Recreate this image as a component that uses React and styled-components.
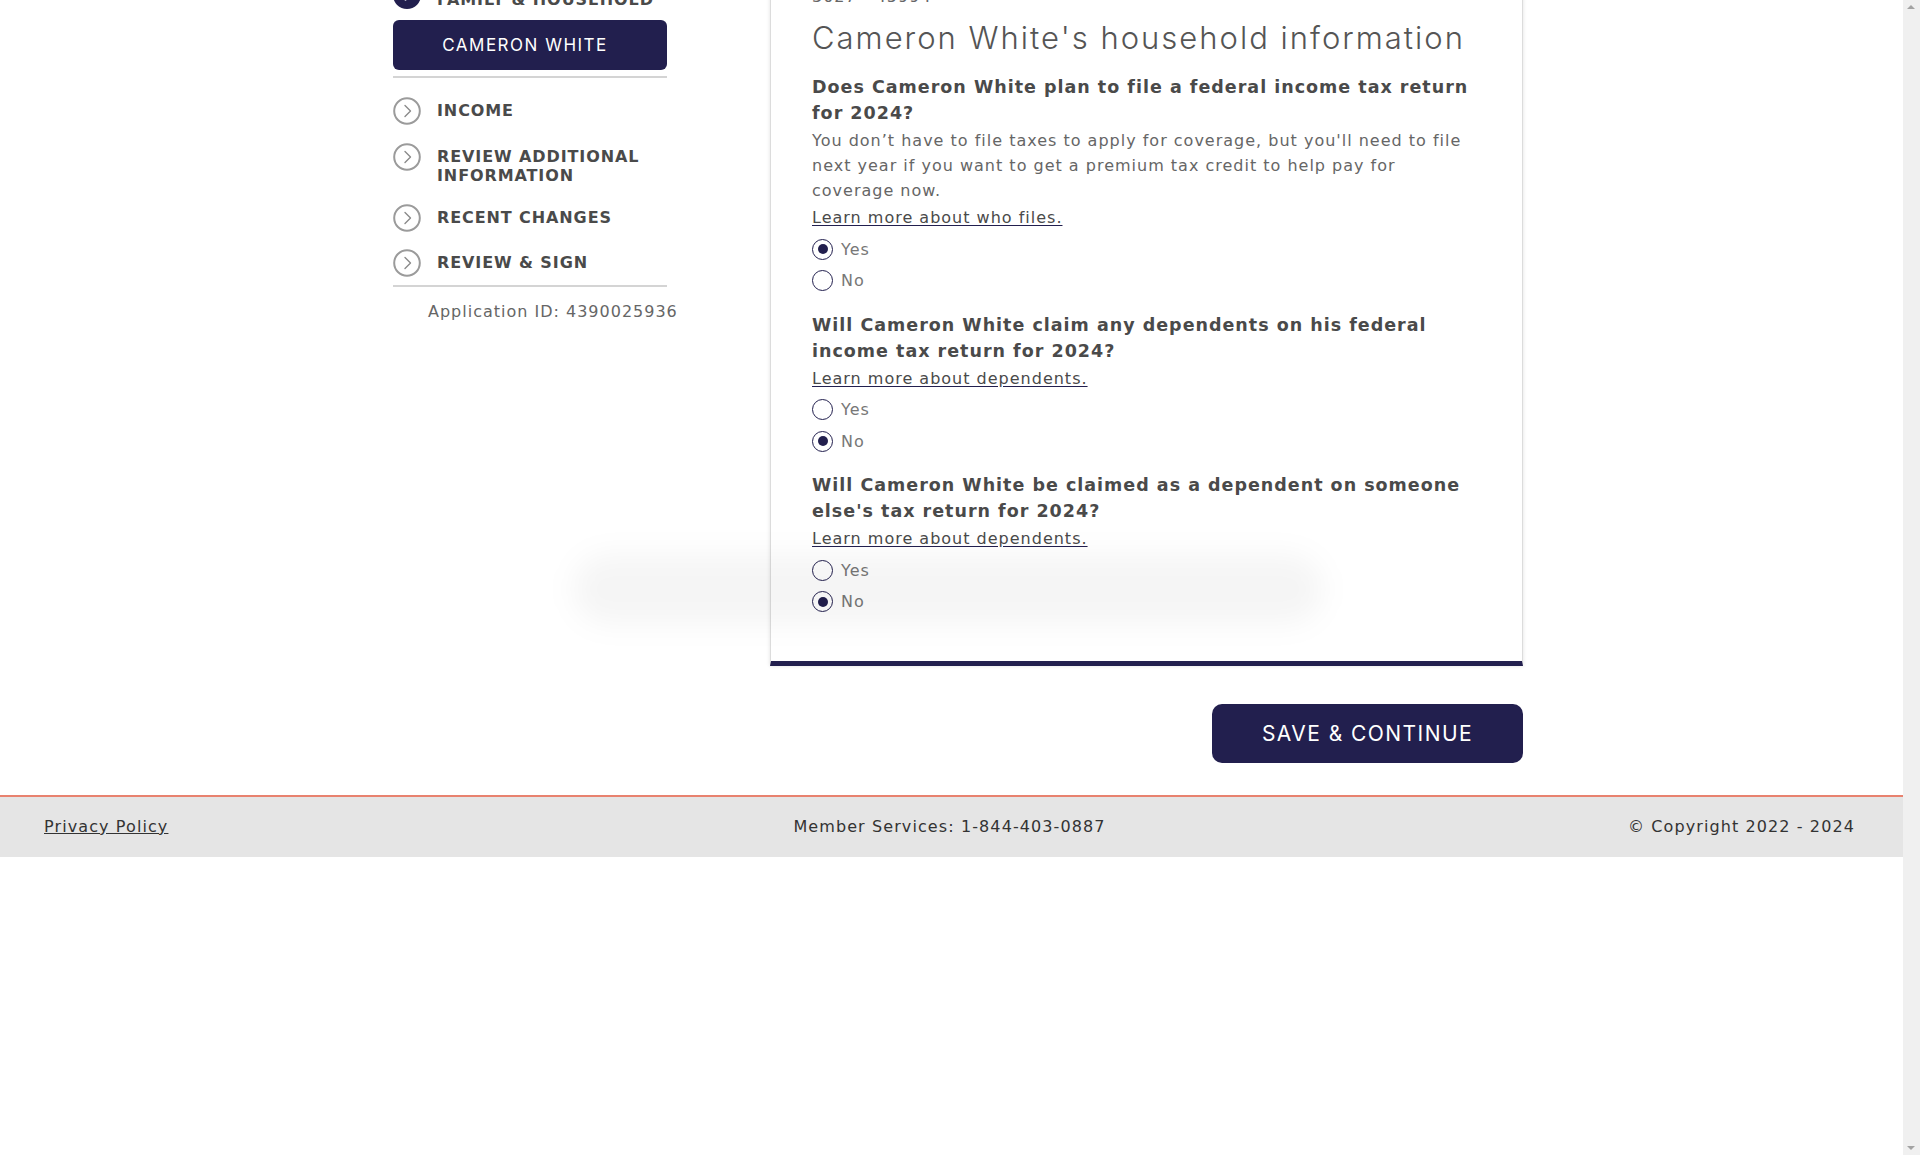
import React from 'react'
import styled, { createGlobalStyle } from 'styled-components'

const colors = {
  navy: '#221f4e',
  heading: '#4a4a4a',
  body: '#666666',
  muted: '#777777',
  rule: '#d4d4d4',
  footer: '#e5e5e5',
  coral: '#e8826f',
  white: '#ffffff',
}

const sans = `'DejaVu Sans', 'Liberation Sans', sans-serif`
const display = `Inter, 'Open Sans', 'Liberation Sans', sans-serif`

const GlobalStyle = createGlobalStyle`
  body {
    margin: 0;
    background: ${colors.white};
    font-family: ${sans};
    color: ${colors.heading};
  }
  * { box-sizing: border-box; }
`

const Page = styled.div`
  display: flex;
  flex-direction: column;
  margin-right: 17px;
`

// stand-in for the browser's classic scrollbar seen in the capture
const ScrollRail = styled.div`
  position: fixed;
  top: 0;
  right: 0;
  width: 17px;
  height: 100vh;
  background: #f0f0f0;

  &::before,
  &::after {
    content: '';
    position: absolute;
    left: 4px;
    border-left: 4.5px solid transparent;
    border-right: 4.5px solid transparent;
  }
  &::before {
    top: 5px;
    border-bottom: 4px solid #a3a3a3;
  }
  &::after {
    bottom: 5px;
    border-top: 4px solid #a3a3a3;
  }
`

const Layout = styled.div`
  position: relative;
  display: flex;
  width: 1130px;
  margin: -60px 0 0 calc(50% - 558.5px);
`

const Sidebar = styled.nav`
  width: 274px;
  padding-top: 41px;
  display: flex;
  flex-direction: column;
`

const StepRow = styled.div`
  display: flex;
  align-items: flex-start;
  gap: 16px;
  margin-bottom: ${(p) => p.$space ?? 18}px;
`

const StepLabel = styled.div`
  padding-top: ${(p) => p.$top ?? 4}px;
  font-size: 16px;
  line-height: 19px;
  font-weight: 700;
  letter-spacing: 0.9px;
  text-transform: uppercase;
  color: ${colors.heading};
`

const PersonButton = styled.div`
  height: 50px;
  border-radius: 6px;
  background: ${colors.navy};
  color: ${colors.white};
  display: flex;
  align-items: center;
  justify-content: center;
  padding-right: 10px;
  font-family: ${display};
  font-size: 17px;
  letter-spacing: 1.5px;
  text-transform: uppercase;
`

const Rule = styled.hr`
  border: 0;
  border-top: 2px solid ${colors.rule};
  margin: ${(p) => p.$margin};
`

const AppId = styled.div`
  padding-left: 35px;
  font-size: 16px;
  line-height: 20px;
  letter-spacing: 1px;
  white-space: nowrap;
  color: ${colors.body};
`

const MainColumn = styled.main`
  margin-left: auto;
  width: 753px;
  display: flex;
  flex-direction: column;
`

const Card = styled.section`
  border: 1px solid #dcdcdc;
  border-top: 0;
  border-bottom: 5px solid ${colors.navy};
  box-shadow: 0 0 4px rgba(0, 0, 0, 0.12);
  padding: 47px 46px 46px 41px;
  background: ${colors.white};
`

const CaseNumber = styled.div`
  font-size: 16px;
  line-height: 20px;
  color: ${colors.body};
  letter-spacing: 1px;
`

const Title = styled.h1`
  margin: 11px 0 16px;
  font-family: ${display};
  font-size: 31px;
  line-height: 40px;
  font-weight: 300;
  letter-spacing: 2px;
  white-space: nowrap;
  color: #555555;
`

const Question = styled.h2`
  margin: ${(p) => (p.$first ? 0 : '18px 0 0')};
  font-size: 17.5px;
  line-height: 26px;
  font-weight: 700;
  letter-spacing: 1px;
  color: ${colors.heading};
`

const Help = styled.p`
  margin: 2px 0 0;
  font-size: 16px;
  line-height: 25px;
  letter-spacing: 1px;
  color: ${colors.body};
`

const LinkLine = styled.div`
  margin-top: 2px;
`

const LearnLink = styled.a`
  font-size: 16px;
  line-height: 25px;
  letter-spacing: 1px;
  color: ${colors.heading};
  text-decoration: underline;
  text-decoration-color: ${colors.navy};
  text-underline-offset: 2px;
`

const Options = styled.div`
  display: flex;
  flex-direction: column;
  gap: 5.5px;
  margin-top: 6px;
`

const OptionRow = styled.label`
  display: flex;
  align-items: center;
  gap: 8px;
  height: 26px;
  font-size: 16px;
  letter-spacing: 1px;
  color: ${colors.muted};
`

const RadioDot = styled.span`
  width: 21px;
  height: 21px;
  border-radius: 50%;
  border: 1.5px solid ${colors.navy};
  display: flex;
  align-items: center;
  justify-content: center;

  &::after {
    content: '';
    width: 10px;
    height: 10px;
    border-radius: 50%;
    background: ${(p) => (p.$checked ? colors.navy : 'transparent')};
  }
`

const Actions = styled.div`
  display: flex;
  justify-content: flex-end;
  padding: 38px 0 32px;
`

const SaveButton = styled.button`
  width: 311px;
  height: 59px;
  border: 0;
  border-radius: 10px;
  background: ${colors.navy};
  color: ${colors.white};
  font-family: ${display};
  font-size: 21px;
  letter-spacing: 1.45px;
  text-transform: uppercase;
  cursor: pointer;
`

const Haze = styled.div`
  position: absolute;
  left: 180px;
  top: 614px;
  width: 750px;
  height: 70px;
  border-radius: 40px;
  background: rgba(0, 0, 0, 0.04);
  filter: blur(14px);
  pointer-events: none;
`

const Footer = styled.footer`
  display: grid;
  grid-template-columns: 1fr auto 1fr;
  align-items: center;
  height: 62px;
  padding: 0 48px 0 44px;
  border-top: 2px solid ${colors.coral};
  background: ${colors.footer};
  font-size: 16px;
  letter-spacing: 1.1px;
  color: #333333;
`

const FooterLink = styled.a`
  justify-self: start;
  color: #333333;
  text-decoration: underline;
`

const FooterRight = styled.div`
  justify-self: end;
`

const StepIcon = ({ done }) => (
  <svg width="28" height="28" viewBox="0 0 28 28" style={{ flexShrink: 0 }}>
    {done ? (
      <>
        <circle cx="14" cy="14" r="14" fill={colors.navy} />
        <path d="M8.5 14.5 L12.5 18.5 L19.5 10" stroke="#fff" strokeWidth="2.4" fill="none" strokeLinecap="round" strokeLinejoin="round" />
      </>
    ) : (
      <>
        <circle cx="14" cy="14" r="12.8" stroke="#9b9b9b" strokeWidth="2" fill="none" />
        <path d="M12 8.5 L17.5 14 L12 19.5" stroke="#8a8a8a" strokeWidth="1.4" fill="none" strokeLinecap="round" strokeLinejoin="round" />
      </>
    )}
  </svg>
)

const steps = [
  { label: 'Income', space: 18 },
  { label: <>Review additional<br />information</>, space: 19 },
  { label: 'Recent changes', space: 17 },
  { label: 'Review & sign', space: 0 },
]

const RadioGroup = ({ value }) => (
  <Options>
    {['Yes', 'No'].map((opt) => (
      <OptionRow key={opt}>
        <RadioDot $checked={value === opt} />
        {opt}
      </OptionRow>
    ))}
  </Options>
)

export default function App() {
  return (
    <Page>
      <GlobalStyle />
      <Layout>
        <Sidebar>
          <StepRow $space={11}>
            <StepIcon done />
            <StepLabel $top={9}>Family &amp; household</StepLabel>
          </StepRow>
          <PersonButton>Cameron White</PersonButton>
          <Rule $margin="6px 0 19px" />
          {steps.map((s, i) => (
            <StepRow key={i} $space={s.space}>
              <StepIcon />
              <StepLabel>{s.label}</StepLabel>
            </StepRow>
          ))}
          <Rule $margin="8px 0 15px" />
          <AppId>Application ID: 4390025936</AppId>
        </Sidebar>

        <MainColumn>
          <Card>
            <CaseNumber>3027 - 45994</CaseNumber>
            <Title>Cameron White's household information</Title>

            <Question $first>Does Cameron White plan to file a federal income tax return for 2024?</Question>
            <Help>
              You don’t have to file taxes to apply for coverage, but you'll need to file next year if you want to get a premium tax credit to help pay for coverage now.
            </Help>
            <LinkLine><LearnLink href="#">Learn more about who files.</LearnLink></LinkLine>
            <RadioGroup value="Yes" />

            <Question>Will Cameron White claim any dependents on his federal income tax return for 2024?</Question>
            <LinkLine><LearnLink href="#">Learn more about dependents.</LearnLink></LinkLine>
            <RadioGroup value="No" />

            <Question>Will Cameron White be claimed as a dependent on someone else's tax return for 2024?</Question>
            <LinkLine><LearnLink href="#">Learn more about dependents.</LearnLink></LinkLine>
            <RadioGroup value="No" />
          </Card>
          <Actions>
            <SaveButton>Save &amp; Continue</SaveButton>
          </Actions>
        </MainColumn>
        <Haze />
      </Layout>

      <Footer>
        <FooterLink href="#">Privacy Policy</FooterLink>
        <div>Member Services: 1-844-403-0887</div>
        <FooterRight>© Copyright 2022 - 2024</FooterRight>
      </Footer>
      <ScrollRail />
    </Page>
  )
}
